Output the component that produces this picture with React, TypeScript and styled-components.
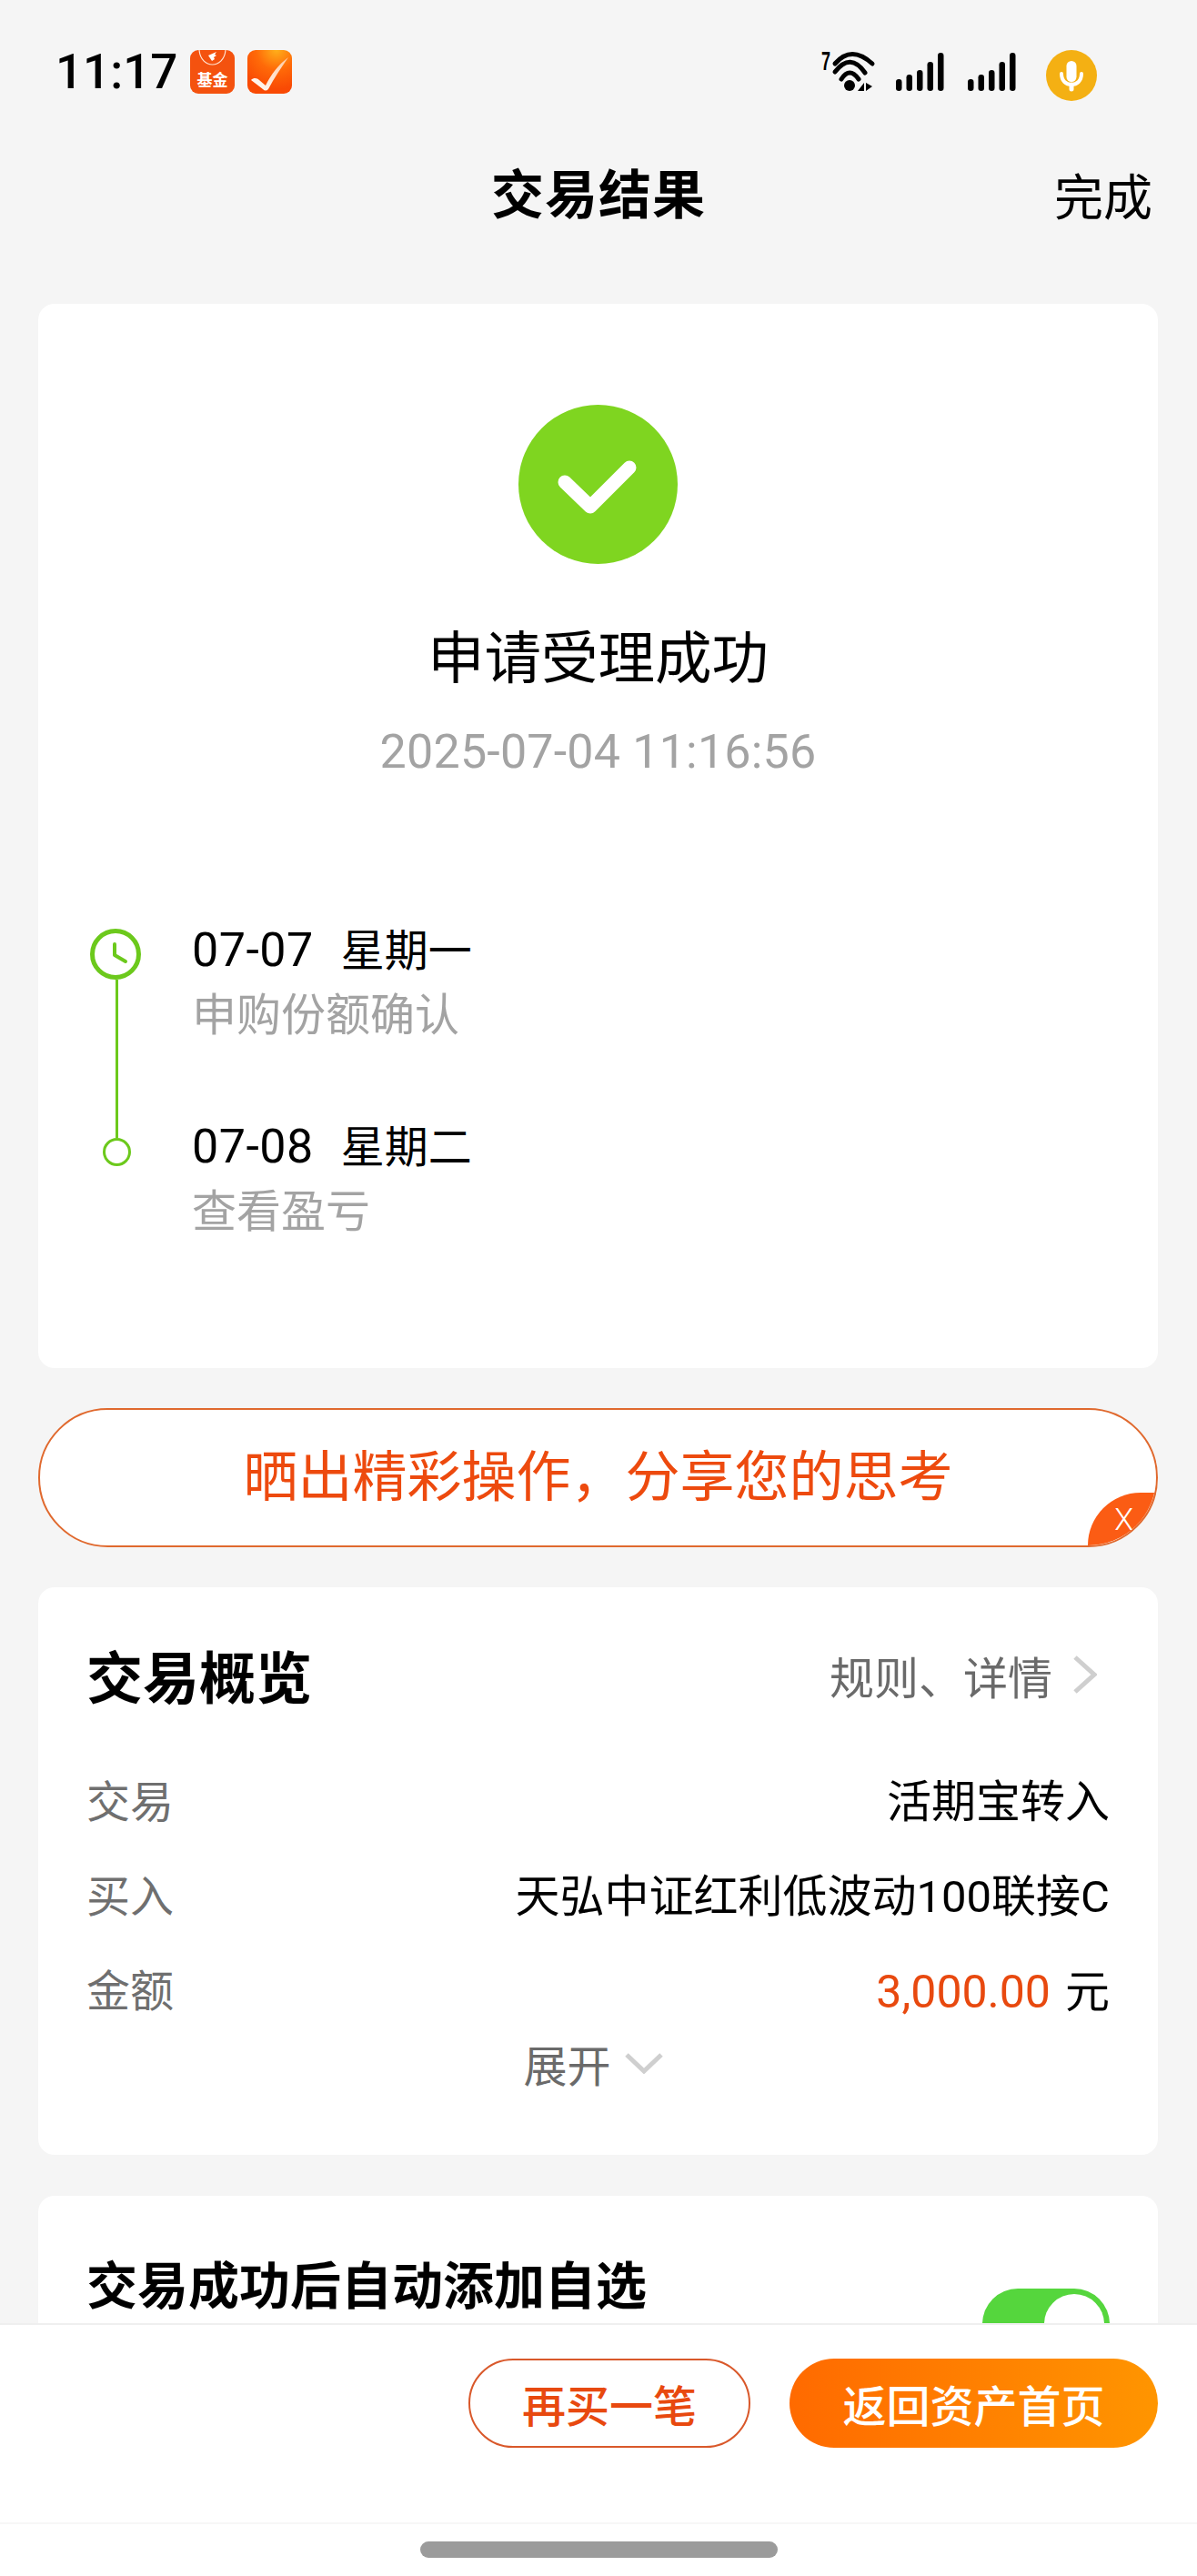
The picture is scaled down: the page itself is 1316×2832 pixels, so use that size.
import React from "react";
import styled, { createGlobalStyle } from "styled-components";

const GlobalStyle = createGlobalStyle`
    html, body {
        margin: 0;
        padding: 0;
        background: #f5f5f5;
    }
    * {
        box-sizing: border-box;
    }
`;

const FONT = `Roboto, "Noto Sans CJK SC", sans-serif`;
const CJK = `"Noto Sans CJK SC", sans-serif`;

const Page = styled.div`
    width: 1316px;
    height: 2832px;
    overflow: hidden;
    display: flex;
    flex-direction: column;
    background: #f5f5f5;
    font-family: ${CJK};
    color: #000;
`;

const Scroller = styled.main`
    flex: 1;
    min-height: 0;
    overflow: hidden;
`;

const StatusBar = styled.div`
    height: 160px;
    padding: 55px 0 0 61px;
    display: flex;
    align-items: flex-start;
`;

const Clock = styled.div`
    font-family: Roboto, sans-serif;
    font-size: 53px;
    font-weight: 500;
    line-height: 48px;
    width: 148px;
`;

const AppIcon = styled.div`
    width: 49px;
    height: 48px;
    border-radius: 9px;
    margin-right: 14px;
    overflow: hidden;
    flex: none;
    svg {
        display: block;
    }
`;

const StatusRight = styled.div`
    margin-left: auto;
    display: flex;
    align-items: flex-start;
    padding-right: 110px;
`;

const StatusSlot = styled.div<{ $width: number; $top?: number }>`
    width: ${(p) => p.$width}px;
    padding-top: ${(p) => p.$top ?? 0}px;
`;

const NavBar = styled.header`
    height: 164px;
    margin-top: 10px;
    display: grid;
    grid-template-columns: 1fr auto 1fr;
    align-items: start;
    padding: 0 49px;
`;

const NavTitle = styled.div`
    grid-column: 2;
    font-size: 58px;
    font-weight: 700;
    line-height: 80px;
    letter-spacing: 1px;
`;

const NavAction = styled.div`
    grid-column: 3;
    justify-self: end;
    font-size: 54px;
    line-height: 80px;
    margin-top: 4px;
`;

const Card = styled.section`
    margin: 0 43px 0 42px;
    background: #fff;
    border-radius: 18px;
`;

const ResultCard = styled(Card)`
    height: 1170px;
    padding-top: 111px;
    display: flex;
    flex-direction: column;
`;

const ResultHead = styled.div`
    display: flex;
    flex-direction: column;
    align-items: center;
`;

const ResultTitle = styled.div`
    font-size: 62.5px;
    line-height: 80px;
    margin-top: 59px;
`;

const ResultTime = styled.div`
    font-family: ${FONT};
    font-size: 52px;
    letter-spacing: 0.2px;
    line-height: 64px;
    color: #a3a3a3;
    margin-top: 36px;
`;

const Timeline = styled.div`
    margin: 154px 0 0 56px;
    display: grid;
    grid-template-columns: 58px 1fr;
    column-gap: 56px;
`;

const Rail = styled.div`
    display: flex;
    flex-direction: column;
    align-items: center;
    padding-top: 8px;
`;

const RailLine = styled.div`
    width: 3px;
    height: 174px;
    margin-left: 2px;
    background: #6cc91c;
`;

const RailDot = styled.div`
    width: 31px;
    height: 31px;
    margin-left: 2px;
    border-radius: 50%;
    border: 3.5px solid #6cc91c;
`;

const Steps = styled.div`
    display: flex;
    flex-direction: column;
`;

const Step = styled.div`
    height: 216px;
`;

const StepDate = styled.div`
    font-family: ${FONT};
    font-size: 52px;
    letter-spacing: 0.5px;
    line-height: 60px;
    display: flex;
    align-items: flex-start;
    gap: 30px;
    margin-left: -1px;
    padding-top: 2px;
    span {
        font-family: ${CJK};
        font-size: 48px;
        line-height: 52px;
        letter-spacing: 0;
    }
`;

const StepNote = styled.div<{ $indent?: boolean }>`
    font-size: 49px;
    line-height: 64px;
    margin-top: 5px;
    color: #a3a3a3;
    margin-left: -1px;
`;

const ShareBanner = styled.div`
    position: relative;
    margin: 44px 43px 44px 42px;
    height: 153px;
    border: 2px solid #e0692e;
    border-radius: 77px;
    background: #fff;
    overflow: hidden;
    display: flex;
    align-items: center;
    justify-content: center;
    font-size: 60px;
    color: #ed4a0e;
    padding-bottom: 12px;
`;

const BannerClose = styled.div`
    position: absolute;
    right: 0;
    bottom: 0;
    width: 75px;
    height: 58px;
    background: #fb5c14;
    border-top-left-radius: 58px 58px;
    color: #fff;
    font-family: Roboto, sans-serif;
    font-size: 34px;
    font-weight: 300;
    line-height: 58px;
    text-align: right;
    padding-right: 25px;
`;

const OverviewCard = styled(Card)`
    height: 624px;
    padding: 54px 53px 0 53px;
`;

const CardHead = styled.div`
    display: flex;
    align-items: center;
    justify-content: space-between;
    height: 84px;
`;

const CardTitle = styled.div`
    font-size: 62px;
    font-weight: 700;
    line-height: 84px;
`;

const HeadLink = styled.div`
    display: flex;
    align-items: center;
    gap: 22px;
    font-size: 49px;
    color: #6a6a6a;
    margin-right: 14px;
`;

const Rows = styled.div`
    margin-top: 67px;
    display: flex;
    flex-direction: column;
    gap: 40px;
`;

const Row = styled.div`
    display: flex;
    justify-content: space-between;
    align-items: center;
    height: 64px;
    font-family: ${FONT};
    font-size: 49px;
    line-height: 64px;
    letter-spacing: 0;
`;

const RowLabel = styled.span`
    color: #6f6f6f;
    font-size: 48px;
`;

const Amount = styled.span`
    color: #e8490f;
    font-size: 50px;
    margin-right: 16px;
`;

const Expand = styled.div`
    display: flex;
    align-items: center;
    justify-content: center;
    gap: 14px;
    margin-top: 14px;
    padding-right: 10px;
    font-size: 48px;
    line-height: 64px;
    color: #6a6a6a;
`;

const SettingCard = styled(Card)`
    margin-top: 45px;
    height: 400px;
    padding: 57px 53px 0 53px;
    display: flex;
    justify-content: space-between;
    align-items: flex-start;
`;

const SettingTitle = styled.div`
    font-size: 56px;
    font-weight: 700;
    line-height: 76px;
`;

const Toggle = styled.div`
    position: relative;
    width: 140px;
    height: 78px;
    margin-top: 45px;
    border-radius: 39px;
    background: #55d63d;
`;

const ToggleKnob = styled.div`
    position: absolute;
    top: 6px;
    right: 6px;
    width: 66px;
    height: 66px;
    border-radius: 50%;
    background: #fff;
`;

const ActionBar = styled.footer`
    flex: none;
    height: 278px;
    background: #fff;
    border-top: 2px solid #efefef;
    display: flex;
    flex-direction: column;
`;

const ActionRow = styled.div`
    height: 219px;
    border-bottom: 2px solid #f7f7f7;
    display: flex;
    justify-content: flex-end;
    align-items: flex-start;
    gap: 43px;
    padding: 37px 43px 0 0;
`;

const OutlineButton = styled.div`
    width: 310px;
    height: 98px;
    border: 2px solid #d9582a;
    border-radius: 49px;
    display: flex;
    align-items: center;
    justify-content: center;
    font-size: 48px;
    font-weight: 500;
    color: #e8490f;
`;

const FilledButton = styled.div`
    width: 405px;
    height: 98px;
    border-radius: 49px;
    background: linear-gradient(90deg, #ff6a00, #ff9500);
    display: flex;
    align-items: center;
    justify-content: center;
    font-size: 48px;
    font-weight: 500;
    color: #fff;
`;

const HomeIndicator = styled.div`
    width: 393px;
    height: 18px;
    margin: 19px auto 0;
    border-radius: 9px;
    background: #9b9b9b;
`;

const FundIcon = () => (
    <svg width="49" height="48" viewBox="0 0 49 48">
        <rect width="49" height="48" fill="#f4520f" />
        <path d="M10 0 C11 11 18 16 24.500 16 C31 16 38 11 39 0" fill="none" stroke="#ffe3d2" strokeWidth="1.2" />
        <path d="M20 6 L29 2 L27 5 L29 6 L26 8 L27 10 L24 12 Z" fill="#fff" />
        <text x="24.500" y="39" textAnchor="middle" fontSize="17" fontWeight="700" fill="#fff" fontFamily={`"Noto Sans CJK SC", serif`}>基金</text>
    </svg>
);

const CheckIcon = () => (
    <svg width="49" height="48" viewBox="0 0 49 48">
        <defs>
            <radialGradient id="taskBg" cx="0.65" cy="0" r="0.9">
                <stop offset="0" stopColor="#ffb01a" />
                <stop offset="0.5" stopColor="#ff6a08" />
                <stop offset="1" stopColor="#f94a04" />
            </radialGradient>
            <linearGradient id="taskTick" x1="0" y1="1" x2="1" y2="0">
                <stop offset="0" stopColor="#fff" />
                <stop offset="1" stopColor="#ffc9a0" />
            </linearGradient>
        </defs>
        <rect width="49" height="48" fill="url(#taskBg)" />
        <path d="M4 33 C7 30 11 31 13 33 L20 39 C26 27 34 16 45 8 C37 20 29 31 23 43 C21 45 19 45 17 43 Z" fill="url(#taskTick)" />
    </svg>
);

const WifiIcon = () => (
    <svg width="60" height="54" viewBox="0 -6 60 54" style={{ display: "block", marginTop: -6 }}>
        <text x="0" y="22" fontFamily={`"Liberation Sans", sans-serif`} fontWeight="700" fontSize="30" textLength="10" lengthAdjust="spacingAndGlyphs" fill="#000">7</text>
        <g fill="none" stroke="#000" strokeWidth="5" strokeLinecap="round">
            <path d="M15 15 Q33 -6 56 15" />
            <path d="M15 24 Q32 2 48 25" />
            <path d="M22 32 Q31 18 41 32" />
        </g>
        <circle cx="31" cy="39" r="6" fill="#000" />
        <path d="M47 36 L47 45 L40 45 Z M49 36 L49 45 L56 40 Z" fill="#000" />
    </svg>
);

const SignalIcon = () => (
    <svg width="53" height="42" viewBox="0 0 53 42" style={{ display: "block" }}>
        {[13, 18, 23, 32, 42].map((h, i) => (
            <rect key={i} x={i * 11.5} y={42 - h} width="6.500" height={h} rx="3.200" fill="#000" />
        ))}
    </svg>
);

const MicIcon = () => (
    <svg width="56" height="56" viewBox="0 0 56 56" style={{ display: "block" }}>
        <circle cx="28" cy="28" r="28" fill="#f4b013" />
        <rect x="22.500" y="12" width="11" height="23" rx="5.500" fill="#fff" />
        <path d="M17 26 C17 34 22 38 28 38 C34 38 39 34 39 26" fill="none" stroke="#fff" strokeWidth="4" strokeLinecap="round" />
        <path d="M28 38 L28 43" stroke="#fff" strokeWidth="5" strokeLinecap="round" />
    </svg>
);

const SuccessBadge = () => (
    <svg width="175" height="175" viewBox="0 0 175 175" style={{ display: "block" }}>
        <circle cx="87.500" cy="87.500" r="87.500" fill="#7fd520" />
        <path d="M51 85 L79 112 L122 69" fill="none" stroke="#fff" strokeWidth="15" strokeLinecap="round" strokeLinejoin="round" />
    </svg>
);

const ClockIcon = () => (
    <svg width="56" height="56" viewBox="0 0 56 56" style={{ display: "block" }}>
        <circle cx="28" cy="28" r="25.500" fill="#fff" stroke="#6cc91c" strokeWidth="5" />
        <path d="M27 17 L27 29 L39 36" fill="none" stroke="#6cc91c" strokeWidth="4" strokeLinecap="round" strokeLinejoin="round" />
    </svg>
);

const ChevronRight = () => (
    <svg width="27" height="44" viewBox="0 0 27 44" style={{ display: "block" }}>
        <path d="M3 3 L24 22 L3 41" fill="none" stroke="#cfcfcf" strokeWidth="5" />
    </svg>
);

const ChevronDown = () => (
    <svg width="44" height="24" viewBox="0 0 44 24" style={{ display: "block" }}>
        <path d="M3 3 L22 21 L41 3" fill="none" stroke="#cfcfcf" strokeWidth="5" />
    </svg>
);

const App = () => {
    return (
        <Page>
            <GlobalStyle />
            <Scroller>
                <StatusBar>
                    <Clock>11:17</Clock>
                    <AppIcon><FundIcon /></AppIcon>
                    <AppIcon><CheckIcon /></AppIcon>
                    <StatusRight>
                        <StatusSlot $width={82}><WifiIcon /></StatusSlot>
                        <StatusSlot $width={79} $top={3}><SignalIcon /></StatusSlot>
                        <StatusSlot $width={86} $top={3}><SignalIcon /></StatusSlot>
                        <MicIcon />
                    </StatusRight>
                </StatusBar>
                <NavBar>
                    <NavTitle>交易结果</NavTitle>
                    <NavAction>完成</NavAction>
                </NavBar>

                <ResultCard>
                    <ResultHead>
                        <SuccessBadge />
                        <ResultTitle>申请受理成功</ResultTitle>
                        <ResultTime>2025-07-04 11:16:56</ResultTime>
                    </ResultHead>
                    <Timeline>
                        <Rail>
                            <ClockIcon />
                            <RailLine />
                            <RailDot />
                        </Rail>
                        <Steps>
                            <Step>
                                <StepDate>07-07<span>星期一</span></StepDate>
                                <StepNote>申购份额确认</StepNote>
                            </Step>
                            <Step>
                                <StepDate>07-08<span>星期二</span></StepDate>
                                <StepNote>查看盈亏</StepNote>
                            </Step>
                        </Steps>
                    </Timeline>
                </ResultCard>

                <ShareBanner>
                    晒出精彩操作，分享您的思考
                    <BannerClose>X</BannerClose>
                </ShareBanner>

                <OverviewCard>
                    <CardHead>
                        <CardTitle>交易概览</CardTitle>
                        <HeadLink>规则、详情<ChevronRight /></HeadLink>
                    </CardHead>
                    <Rows>
                        <Row><RowLabel>交易</RowLabel><span>活期宝转入</span></Row>
                        <Row><RowLabel>买入</RowLabel><span>天弘中证红利低波动100联接C</span></Row>
                        <Row><RowLabel>金额</RowLabel><span><Amount>3,000.00</Amount>元</span></Row>
                    </Rows>
                    <Expand>展开<ChevronDown /></Expand>
                </OverviewCard>

                <SettingCard>
                    <SettingTitle>交易成功后自动添加自选</SettingTitle>
                    <Toggle><ToggleKnob /></Toggle>
                </SettingCard>
            </Scroller>

            <ActionBar>
                <ActionRow>
                    <OutlineButton>再买一笔</OutlineButton>
                    <FilledButton>返回资产首页</FilledButton>
                </ActionRow>
                <HomeIndicator />
            </ActionBar>
        </Page>
    );
};

export default App;
